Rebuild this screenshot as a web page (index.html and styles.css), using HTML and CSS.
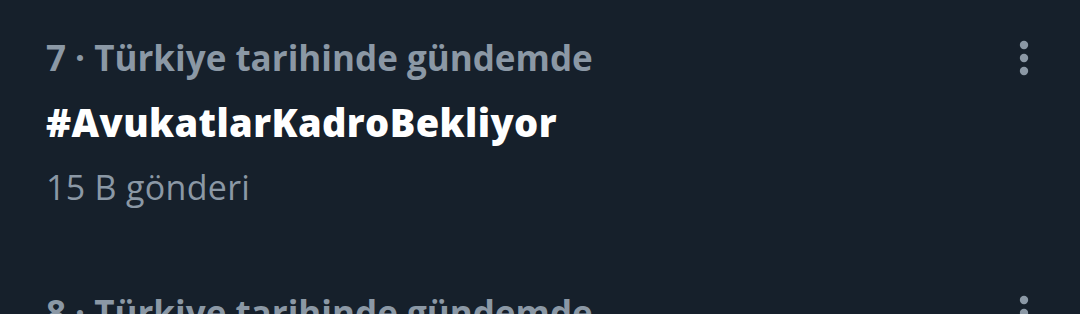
FILE: index.html
```html
<!DOCTYPE html>
<html lang="tr">
<head>
    <meta charset="UTF-8">
    <meta name="viewport" content="width=device-width, initial-scale=1.0">
    <title>Gündem</title>
    <link rel="stylesheet" href="styles.css">
</head>
<body>
<div class="trend-list">
    <div class="trend">
        <div class="trend-body">
            <div class="trend-meta">7 · Türkiye tarihinde gündemde</div>
            <div class="trend-name">#AvukatlarKadroBekliyor</div>
            <div class="trend-count">15 B gönderi</div>
        </div>
        <button class="more-button" type="button" aria-label="Daha fazla">
            <svg width="12" height="38" viewBox="0 0 12 38">
                <circle cx="6" cy="6" r="4.2"/>
                <circle cx="6" cy="19" r="4.2"/>
                <circle cx="6" cy="32" r="4.2"/>
            </svg>
        </button>
    </div>
    <div class="trend">
        <div class="trend-body">
            <div class="trend-meta">8 · Türkiye tarihinde gündemde</div>
            <div class="trend-name">#TrendBaşlığı</div>
            <div class="trend-count">10 B gönderi</div>
        </div>
        <button class="more-button" type="button" aria-label="Daha fazla">
            <svg width="12" height="38" viewBox="0 0 12 38">
                <circle cx="6" cy="6" r="4.2"/>
                <circle cx="6" cy="19" r="4.2"/>
                <circle cx="6" cy="32" r="4.2"/>
            </svg>
        </button>
    </div>
</div>
</body>
</html>
```

FILE: styles.css
```css
* {
    margin: 0;
    padding: 0;
    box-sizing: border-box;
}

body {
    background-color: #16202b;
    font-family: 'Open Sans', 'Liberation Sans', sans-serif;
    overflow: hidden;
}

.trend {
    display: flex;
    justify-content: space-between;
    align-items: flex-start;
    height: 255px;
    padding: 25px 50px 0 46px;
}

.trend-body {
    display: flex;
    flex-direction: column;
}

.trend-meta {
    color: #8b98a5;
    font-size: 35px;
    font-weight: 700;
    line-height: 65px;
}

.trend-name {
    color: #ffffff;
    font-size: 38px;
    font-weight: 800;
    letter-spacing: 0.4px;
    line-height: 65px;
}

.trend-count {
    color: #8b98a5;
    font-size: 34px;
    font-weight: 400;
    letter-spacing: 0.3px;
    line-height: 65px;
}

.more-button {
    margin-top: 14px;
    border: none;
    background: none;
    fill: #8b98a5;
    cursor: pointer;
}

.more-button svg {
    display: block;
}
```
